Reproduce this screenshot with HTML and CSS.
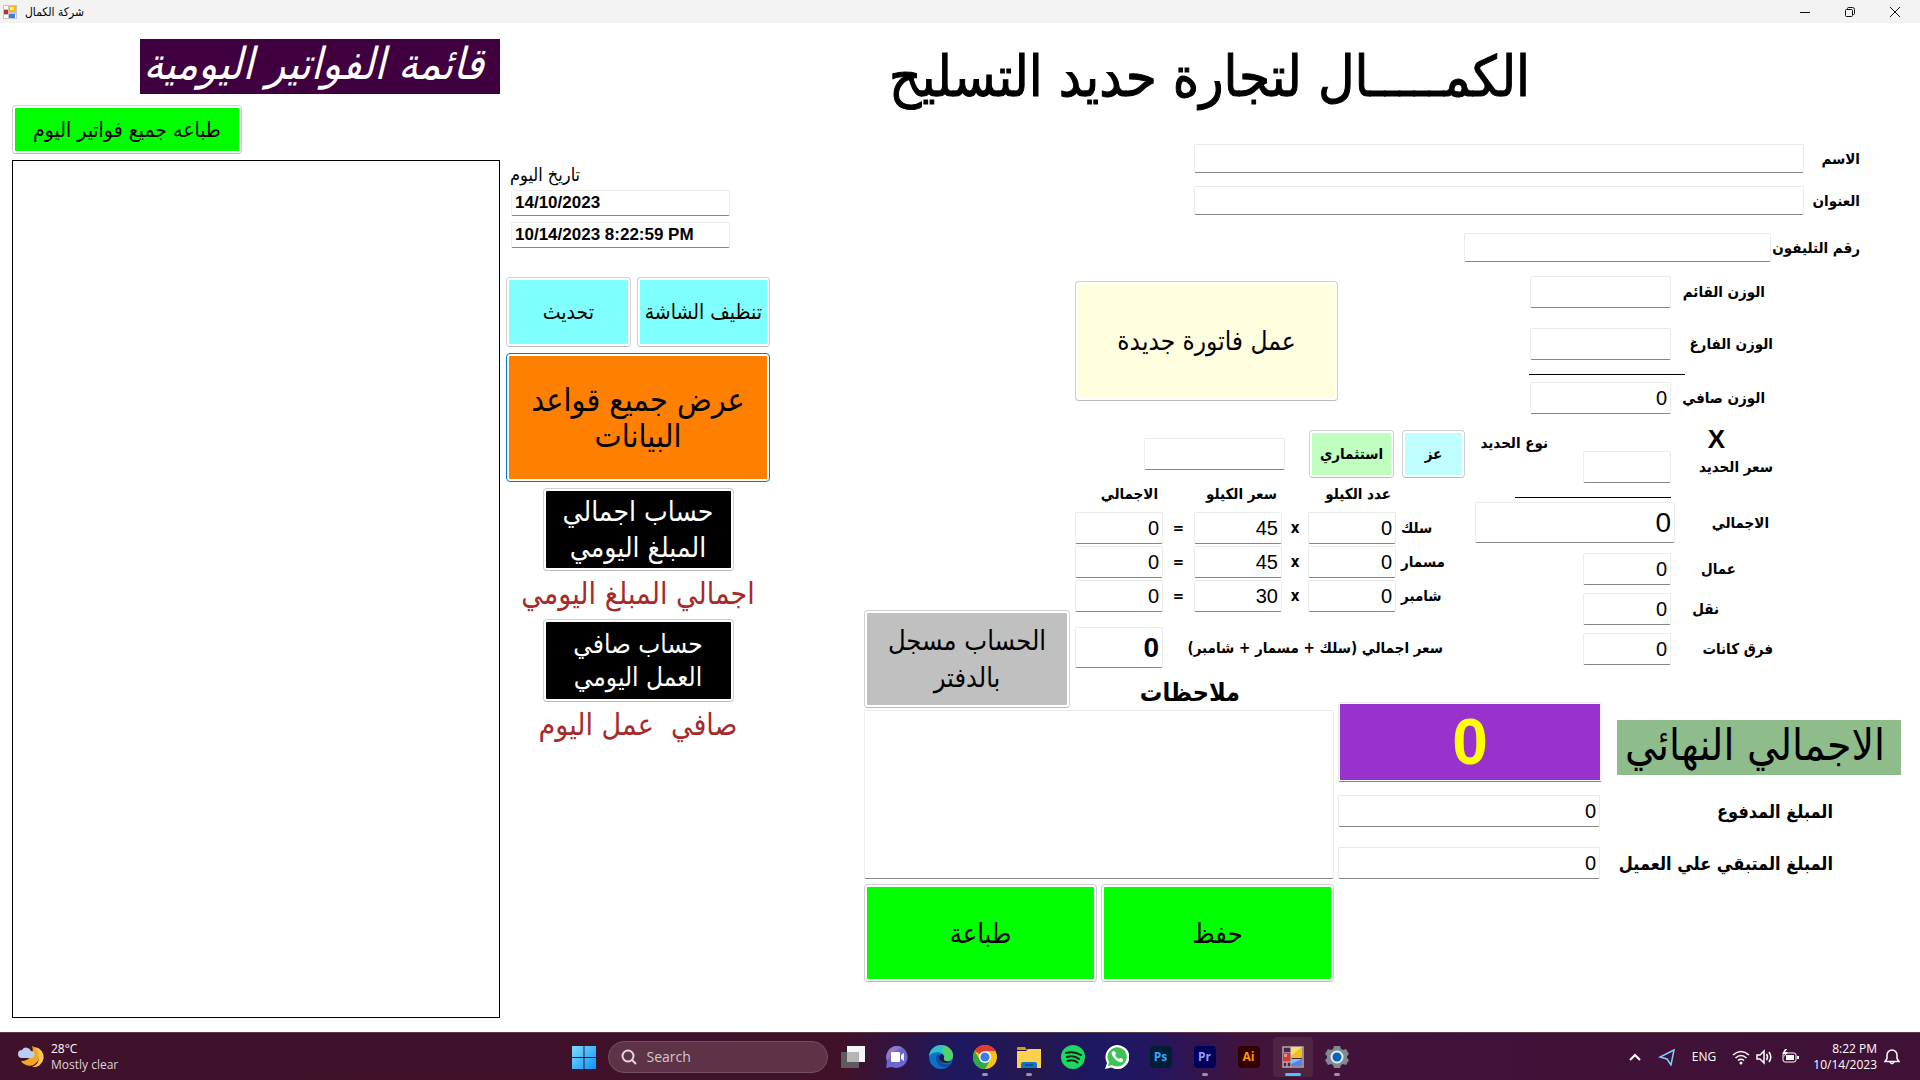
FILE: index.html
```html
<!DOCTYPE html>
<html lang="ar">
<head>
<meta charset="utf-8">
<title>شركة الكمال</title>
<link rel="stylesheet" href="styles.css">
</head>
<body>
<header class="titlebar">
  <svg class="app-icon" viewBox="0 0 14 14"><rect width="14" height="14" fill="#c4c4c4"/><path d="M1 1h4v3H1zM1 10h4v3H1zM12 9h1v4h-1z" fill="#fff"/><rect x="6" y="1" width="7" height="6" fill="#f2b71d"/><rect x="7" y="2" width="4" height="3" fill="#ffe27a"/><rect x="1" y="5" width="4" height="4" fill="#c9281c"/><rect x="6" y="9" width="6" height="4" fill="#3f7ce0"/></svg>
  <span class="titlebar-text" dir="rtl">شركة الكمال</span>
  <div class="window-buttons">
    <button aria-label="Minimize"><svg viewBox="0 0 12 12"><path d="M1 6.500h10"/></svg></button>
    <button aria-label="Restore"><svg viewBox="0 0 12 12"><rect x="1.500" y="3.500" width="7" height="7" rx="1"/><path d="M3.500 3.500v-1q0-1 1-1h4q2 0 2 2v4q0 1-1 1h-1"/></svg></button>
    <button aria-label="Close"><svg viewBox="0 0 12 12"><path d="M1 1l10 10M11 1L1 11"/></svg></button>
  </div>
</header>

<main class="window">
  <section class="invoices">
    <h2 class="list-title" dir="rtl">قائمة الفواتير اليومية</h2>
    <button class="btn green print-all" dir="rtl">طباعه جميع فواتير اليوم</button>
    <div class="invoice-list"></div>
  </section>

  <section class="actions">
    <label class="date-label" for="today" dir="rtl">تاريخ اليوم</label>
    <input class="field date" id="today" value="14/10/2023">
    <input class="field date" aria-label="الوقت" value="10/14/2023 8:22:59 PM">
    <div class="pair">
      <button class="btn aqua refresh" dir="rtl">تحديث</button>
      <button class="btn aqua clear" dir="rtl">تنظيف الشاشة</button>
    </div>
    <button class="btn orange" dir="rtl">عرض جميع قواعد<br>البيانات</button>
    <button class="btn black" dir="rtl">حساب اجمالي<br>المبلغ اليومي</button>
    <p class="result" dir="rtl">اجمالي المبلغ اليومي</p>
    <button class="btn black small" dir="rtl">حساب صافي<br>العمل اليومي</button>
    <p class="result" dir="rtl">صافي &nbsp;عمل اليوم</p>
  </section>

  <section class="invoice" dir="rtl">
    <h1>الكمـــــال لتجارة حديد التسليح</h1>
    <div class="customer">
      <div class="customer-row"><label for="name">الاسم</label><input class="field" id="name"></div>
      <div class="customer-row"><label for="address">العنوان</label><input class="field" id="address"></div>
      <div class="customer-row phone"><label for="phone">رقم التليفون</label><input class="field" id="phone"></div>
    </div>

    <div class="details">
      <div class="calc">
        <div class="calc-row inset"><label for="gross">الوزن القائم</label><input class="field num wide" id="gross"></div>
        <div class="calc-row tare"><label for="tare">الوزن الفارغ</label><input class="field num wide" id="tare"></div>
        <hr class="rule">
        <div class="calc-row inset"><label for="net">الوزن صافي</label><input class="field num wide" id="net" value="0"></div>
        <div class="times">X</div>
        <div class="calc-row"><label for="price">سعر الحديد</label><input class="field num" id="price"></div>
        <hr class="rule second-rule">
        <div class="calc-row sum-row"><label for="total">الاجمالي</label><input class="field num big" id="total" value="0"></div>
        <div class="calc-row inset-mid"><label for="workers">عمال</label><input class="field num" id="workers" value="0"></div>
        <div class="calc-row inset-deep"><label for="transport">نقل</label><input class="field num" id="transport" value="0"></div>
        <div class="calc-row"><label for="diff">فرق كانات</label><input class="field num" id="diff" value="0"></div>
      </div>

      <div class="extras">
        <button class="btn cream">عمل فاتورة جديدة</button>
        <div class="type-row">
          <label for="type">نوع الحديد</label>
          <button class="btn ezz">عز</button>
          <button class="btn mint">استثماري</button>
          <input class="field num wide" id="type">
        </div>
        <table class="parts">
          <thead><tr><td class="part"></td><th>عدد الكيلو</th><td class="op-x"></td><th>سعر الكيلو</th><td class="op-eq"></td><th>الاجمالي</th></tr></thead>
          <tbody>
            <tr><th class="part">سلك</th><td><input class="field num" aria-label="عدد سلك" value="0"></td><td class="op-x">x</td><td><input class="field num" aria-label="سعر سلك" value="45"></td><td class="op-eq">=</td><td><input class="field num" aria-label="اجمالي سلك" value="0"></td></tr>
            <tr><th class="part">مسمار</th><td><input class="field num" aria-label="عدد مسمار" value="0"></td><td class="op-x">x</td><td><input class="field num" aria-label="سعر مسمار" value="45"></td><td class="op-eq">=</td><td><input class="field num" aria-label="اجمالي مسمار" value="0"></td></tr>
            <tr><th class="part">شامبر</th><td><input class="field num" aria-label="عدد شامبر" value="0"></td><td class="op-x">x</td><td><input class="field num" aria-label="سعر شامبر" value="30"></td><td class="op-eq">=</td><td><input class="field num" aria-label="اجمالي شامبر" value="0"></td></tr>
          </tbody>
        </table>
        <div class="parts-total"><label for="parts-sum">سعر اجمالي (سلك + مسمار + شامبر)</label><input class="field num big bold" id="parts-sum" value="0"></div>
        <label class="notes-label" for="notes">ملاحظات</label>
      </div>

      <button class="btn grey">الحساب مسجل<br>بالدفتر</button>
    </div>

    <div class="footer-row">
      <div class="totals">
        <div class="total-row grand"><label for="grand">الاجمالي النهائي</label><input class="field" id="grand" value="0"></div>
        <div class="total-row"><label for="paid">المبلغ المدفوع</label><input class="field num" id="paid" value="0"></div>
        <div class="total-row"><label for="rest">المبلغ المتبقي علي العميل</label><input class="field num" id="rest" value="0"></div>
      </div>
      <div class="notes">
        <textarea class="field" id="notes"></textarea>
        <div class="notes-buttons">
          <button class="btn green">حفظ</button>
          <button class="btn green">طباعة</button>
        </div>
      </div>
    </div>
  </section>
</main>

<footer class="taskbar">
  <div class="weather">
    <svg viewBox="0 0 26 26"><path d="M14 2a10 10 0 1 1-11 15a11 11 0 0 0 11-15z" fill="#f5a623"/><path d="M17 3a10 10 0 0 1-3 20c8-2 9-12 3-20z" fill="#ffc65c"/><path d="M4 14a4 4 0 0 1 0-8a5 5 0 0 1 9 1a3.500 3.500 0 0 1 0 7z" fill="#b9cdec"/></svg>
    <div>28°C<br><span>Mostly clear</span></div>
  </div>
  <nav class="apps">
    <button class="app" aria-label="Start"><svg viewBox="0 0 24 24"><defs><linearGradient id="w" x1="0" y1="0" x2="1" y2="1"><stop offset="0" stop-color="#7fdcff"/><stop offset="1" stop-color="#0a94f8"/></linearGradient></defs><path d="M0 1h11.500v11H0zM12.500 1H24v11H12.500zM0 13h11.500v11H0zM12.500 13H24v11H12.500z" fill="url(#w)"/></svg></button>
    <div class="search">
      <svg viewBox="0 0 16 16"><circle cx="7" cy="7" r="5.500"/><path d="M11 11l4 4"/></svg>
      <input aria-label="Search" placeholder="Search">
    </div>
    <button class="app" aria-label="Task view"><svg viewBox="0 0 24 24"><rect x="6" y="1" width="18" height="16" fill="#f4f4f4"/><rect y="7" width="18" height="16" fill="#5c5c5c"/><rect x="6" y="7" width="12" height="10" fill="#b5b5b5"/></svg></button>
    <button class="app" aria-label="Chat"><svg viewBox="0 0 24 24"><path d="M12 1a11 11 0 1 1-5 21l-6 1 1-7A11 11 0 0 1 12 1z" fill="#6a67cf"/><path d="M12 1a11 11 0 0 0-10 15l5-8 10-6z" fill="#8f78c4"/><rect x="6" y="7" width="9" height="10" rx="1" fill="#fff"/><path d="M16 10l3-2v8l-3-2z" fill="#fff"/></svg></button>
    <button class="app" aria-label="Edge"><svg viewBox="0 0 24 24"><circle cx="12" cy="12" r="12" fill="#0c72c8"/><path d="M0 11C1 4 6 0 12 0c7 0 12 5 12 10 0 4-3 6-6 6-4 0-4-2-3-3 1-5-8-9-15-2z" fill="#2fc2c8"/><path d="M15 1c6 1 9 6 9 10 0 3-3 5-6 5-4 0-4-2-3-3 1-2 1-5-2-7z" fill="#58d362"/><path d="M9 9c-4 5-1 13 7 13 3 0 5-2 6-4-6 3-12 0-11-5 0-2-1-3-2-4z" fill="#134a9a"/><path d="M11 10c-2 3 0 8 6 8 3 0 5-1 6-2-2 1-9 1-8-3 1-2-2-5-4-3z" fill="#1c1850"/></svg></button>
    <button class="app open" aria-label="Chrome"><svg viewBox="0 0 24 24"><circle cx="12" cy="12" r="12" fill="#fbc116"/><path d="M12 12L1.600 6A12 12 0 0 1 22.400 6H12z" fill="#e33b2e"/><path d="M1.600 6A12 12 0 0 0 12 24l5.200-9L12 12 6.800 15z" fill="#2da94f"/><circle cx="12" cy="12" r="6" fill="#fff"/><circle cx="12" cy="12" r="4.600" fill="#3b7ded"/></svg></button>
    <button class="app open" aria-label="File Explorer"><svg viewBox="0 0 24 24"><path d="M0 3q0-1 1-1h7l2 3H0z" fill="#d99b13"/><path d="M0 6h9l2-2h13v19H0z" fill="#ffd04d"/><path d="M4 23v-4q0-2 2-2h12q2 0 2 2v4z" fill="#1475c4"/><path d="M8 20h8" stroke="#0a4a86" stroke-width="1.500"/></svg></button>
    <button class="app" aria-label="Spotify"><svg viewBox="0 0 24 24"><circle cx="12" cy="12" r="12" fill="#1ed760"/><path d="M5 8q8-2 15 2M6 12q7-2 12 2M6.500 16q6-2 10 1.500" fill="none" stroke="#10240f" stroke-width="2" stroke-linecap="round"/></svg></button>
    <button class="app" aria-label="WhatsApp"><svg viewBox="0 0 24 24"><path d="M0 24l2-6A12 12 0 1 1 6.500 22.500z" fill="#fff"/><path d="M3 21l1-4A9.600 9.600 0 1 1 7 20z" fill="#3fc153"/><path d="M8 6c-2 1-2 4 2 8s7 4 8 2c1-2-2-3-3-3l-1 1c-2-1-3-2-4-4l1-1c0-1-1-3-3-3z" fill="#fff"/></svg></button>
    <button class="app" aria-label="Photoshop"><span class="tile ps">Ps</span></button>
    <button class="app open" aria-label="Premiere"><span class="tile pr">Pr</span></button>
    <button class="app" aria-label="Illustrator"><span class="tile ai">Ai</span></button>
    <button class="app active" aria-label="شركة الكمال"><svg viewBox="0 0 24 24"><path d="M2 2h20v20H2zM2 8h8M2 17h20M10 2v20M6 17v5" fill="none" stroke="#b8a5ae" stroke-width="1.500"/><rect x="10" y="2" width="11" height="11" fill="#efbe21"/><path d="M10 2h11L10 11z" fill="#f8de63"/><rect x="2" y="8" width="7" height="8" fill="#d83a30"/><rect x="3" y="9" width="3" height="3" fill="#f38b80"/><rect x="10" y="14" width="11" height="7" fill="#4a88ee"/><path d="M10 14h11L10 19z" fill="#8db8f8"/></svg></button>
    <button class="app open" aria-label="Settings"><svg viewBox="0 0 24 24"><path d="M9 1h6l1 3 2 1 3-1 3 5-2 2v2l2 2-3 5-3-1-2 1-1 3H9l-1-3-2-1-3 1-3-5 2-2v-2L0 9l3-5 3 1 2-1z" fill="#7f8a93"/><circle cx="12" cy="12" r="6.500" fill="#e8ecef"/><circle cx="12" cy="12" r="4.500" fill="#0b63b5"/></svg></button>
  </nav>
  <div class="tray">
    <svg class="ico chev" viewBox="0 0 18 18"><path d="M4 12l5-5 5 5" stroke-width="2"/></svg>
    <svg class="ico loc" viewBox="0 0 18 18"><path d="M16 2L2 9l7 2 4 6z" stroke="#7fd0f5" stroke-width="1.500"/></svg>
    <span class="lang">ENG</span>
    <svg class="ico" viewBox="0 0 18 18"><path d="M1 7q8-7 16 0M3.500 10q5.500-5 11 0M6 12.500q3-2.500 6 0" stroke-width="1.500"/><circle cx="9" cy="15" r="1.500" fill="#fff" stroke="none"/></svg>
    <svg class="ico vol" viewBox="0 0 18 18"><path d="M1 7h3l4-4v12l-4-4H1zM10.500 6q2 3 0 6M13 4q3.500 5 0 10" stroke-width="1.500"/></svg>
    <svg class="ico bat" viewBox="0 0 18 18"><rect x="2" y="5" width="13" height="9" rx="2"/><rect x="5" y="7" width="8" height="5" fill="#fff" stroke="none"/><path d="M17 8v3" stroke-width="2"/><path d="M4 1L1 6h3l-2 4 5-6H4l2-3z" fill="#fff" stroke="none"/></svg>
    <div class="clock">8:22 PM<br>10/14/2023</div>
    <svg class="ico bell" viewBox="0 0 18 18"><path d="M2 13.500h14l-2-3V7A5 5 0 0 0 4 7v3.500zM7 14q2 3.500 4 0" stroke-width="1.500"/></svg>
  </div>
</footer>
</body>
</html>
```
FILE: styles.css
```css
* { box-sizing: border-box; }

body {
  margin: 0;
  min-height: 100vh;
  display: flex;
  flex-direction: column;
  background: #fff;
  color: #000;
  font-family: "DejaVu Sans Condensed", "DejaVu Sans", sans-serif;
  font-size: 16px;
}

h1, h2, p { margin: 0; font-weight: normal; }
button, input, textarea { font: inherit; color: inherit; }
svg { display: block; }

/* Title bar */
.titlebar {
  display: flex;
  align-items: center;
  height: 23px;
  padding: 0 3px;
  background: #f3f3f3;
}
.app-icon { width: 14px; height: 14px; }
.titlebar-text { margin-left: 8px; font-size: 12px; }
.window-buttons { display: flex; margin-left: auto; }
.window-buttons button {
  display: grid;
  place-items: center;
  width: 45px;
  height: 23px;
  padding: 0;
  border: 0;
  background: none;
}
.window-buttons svg { width: 12px; height: 12px; fill: none; stroke: #111; }

/* Shared controls */
.field {
  min-width: 0;
  border: 1px solid #ebebeb;
  border-bottom-color: #868686;
  border-radius: 2px;
  background: #fff;
  padding: 0 3px;
  outline: 0;
}
.num {
  width: 88px;
  height: 32px;
  direction: ltr;
  text-align: right;
  font-family: "Liberation Sans", sans-serif;
  font-size: 20px;
  font-weight: normal;
}
.wide { width: 141px; }
.big { height: 41px; font-size: 28px; }
.bold { font-weight: bold; }

.btn {
  border: 1px solid #d0d0d0;
  border-bottom-color: #bababa;
  border-radius: 4px;
  padding: 2px;
  background-color: #fff;
  background-clip: content-box;
  text-align: center;
  font-weight: normal;
  white-space: nowrap;
}
.green { background-color: #00ff00; }
.aqua { background-color: #80ffff; }
.orange { background-color: #ff8000; border-color: #0078d4; }
.black { background-color: #000; color: #fff; }
.cream { background-color: #ffffe0; }
.mint { background-color: #c0ffc0; }
.ezz { background-color: #c0ffff; }
.grey { background-color: #c0c0c0; }

/* Three panes */
.window {
  flex: 1;
  display: grid;
  grid-template-columns: minmax(0, 488fr) minmax(0, 264fr) minmax(0, 1137fr);
  padding: 0 19px 0 12px;
}

.invoices {
  display: flex;
  flex-direction: column;
  align-items: flex-start;
  padding: 16px 0 14px;
}
.list-title {
  align-self: flex-end;
  height: 55px;
  padding: 0 16px 0 4px;
  background: #400040;
  color: #fff;
  font-size: 44px;
  line-height: 50px;
  font-style: italic;
  white-space: nowrap;
}
.print-all { width: 230px; height: 49px; margin: 11px 0 6px; font-size: 21px; }
.invoice-list { flex: 1; align-self: stretch; border: 1px solid #000; }

.actions {
  display: flex;
  flex-direction: column;
  margin-left: 6px;
  margin-right: -6px;
  padding-top: 140px;
}
.date-label { align-self: flex-start; margin-left: 4px; height: 27px; line-height: 24px; font-size: 18px; }
.date {
  width: 219px;
  height: 26px;
  margin: 0 0 6px 5px;
  font-family: "Liberation Sans", sans-serif;
  font-size: 17px;
  font-weight: bold;
}
.pair { display: flex; gap: 6px; height: 70px; margin: 23px 0 6px; font-size: 21px; }
.refresh { flex: 124; }
.clear { flex: 133; }
.orange { height: 129px; font-size: 32px; line-height: 36px; }
.black { align-self: center; width: 191px; height: 83px; margin-top: 6px; font-size: 28px; line-height: 36px; }
.small { font-size: 26px; line-height: 33px; }
.result { height: 42px; line-height: 46px; text-align: center; font-size: 30px; color: #a52a2a; white-space: nowrap; }

/* Invoice form */
.invoice { display: flex; flex-direction: column; padding-left: 100px; font-size: 15px; font-weight: bold; }
.invoice h1 {
  height: 121px;
  padding-right: 371px;
  font-size: 56px;
  line-height: 108px;
  white-space: nowrap;
  -webkit-text-stroke: 1px #000;
}

.customer { display: flex; flex-direction: column; gap: 13px; padding: 0 41px 0 330px; }
.customer-row { display: flex; align-items: center; }
.customer-row label { width: 56px; white-space: nowrap; }
.customer-row .field { flex: 1; height: 29px; }
.phone { margin-top: 5px; padding-left: 270px; }
.customer-row.phone label { width: 89px; }

.details { display: flex; padding-right: 128px; margin-top: 14px; }
.calc { width: 298px; }
.calc-row { display: flex; align-items: center; margin-bottom: 8px; }
.calc-row label { width: 102px; white-space: nowrap; }
.tare { margin: 20px 0 0; }
.inset { margin-bottom: 0; }
.inset label { padding-right: 8px; }
.inset-mid label { padding-right: 37px; }
.inset-deep label { padding-right: 54px; }
.rule { width: 156px; margin: 14px 88px 7px 0; border: 0; border-top: 1px solid #000; }
.second-rule { margin: 14px 102px 4px 0; }
.times { height: 37px; padding-right: 48px; font: bold 26px/50px "Liberation Sans", sans-serif; }
.sum-row { margin-bottom: 10px; }
.sum-row .field { width: 200px; }
.sum-row label { width: 98px; padding-right: 4px; }

.extras { display: flex; flex-direction: column; width: 400px; }
.cream { align-self: flex-end; width: 263px; height: 120px; margin-top: 5px; font-size: 26px; }
.type-row { display: flex; align-items: center; height: 48px; margin: 29px -73px 0 0; }
.type-row label { align-self: flex-start; width: 83px; line-height: 26px; }
.ezz { width: 63px; height: 48px; font-weight: bold; }
.mint { width: 85px; height: 48px; margin: 0 8px 0 24px; font-weight: bold; }

.parts { width: 400px; border-collapse: collapse; table-layout: fixed; }
.parts td, .parts th { padding: 0 0 2px; height: 34px; vertical-align: middle; white-space: nowrap; }
.parts thead th { height: 33px; width: 88px; padding-right: 5px; text-align: right; }
.parts .field { display: block; }
.parts .part { width: 79px; padding-left: 45px; text-align: right; }
.parts .op-x { width: 26px; text-align: center; }
.parts .op-eq { width: 31px; text-align: center; }
.parts tbody .part { padding-left: 5px; text-align: left; }
.parts-total { display: flex; justify-content: space-between; align-items: center; margin-top: 13px; padding-right: 32px; }
.notes-label { height: 42px; line-height: 50px; margin-right: 235px; font-size: 25px; white-space: nowrap; }

.grey { flex: 1; align-self: flex-end; height: 98px; margin: 0 5px 2px 0; font-size: 27px; line-height: 37px; }

.footer-row { display: flex; gap: 4px; }
.totals { width: 563px; margin-top: -8px; }
.total-row { display: flex; align-items: center; justify-content: space-between; margin-bottom: 20px; padding-right: 68px; font-size: 18px; }
.total-row .num { width: 262px; }
.total-row label { white-space: nowrap; }
.total-row.grand { height: 80px; margin-bottom: 13px; padding: 0; }
.grand label { height: 55px; padding: 0 16px 0 8px; margin-top: 10px; background: #8fbc8b; font-size: 44px; line-height: 50px; font-weight: normal; }
.grand .field {
  width: 264px;
  height: 80px;
  padding: 1px;
  background-color: #9932cc;
  background-clip: content-box;
  color: #ffff00;
  text-align: center;
  font: bold 64px "Liberation Sans", sans-serif;
}
.notes { flex: 1; display: flex; flex-direction: column; }
.notes textarea { height: 169px; resize: none; }
.notes-buttons { display: flex; gap: 4px; margin-top: 5px; }
.notes-buttons .btn { flex: 1; height: 98px; font-size: 27px; }

/* Taskbar */
.taskbar {
  display: grid;
  grid-template-columns: 1fr auto 1fr;
  height: 48px;
  color: #fff;
  font-family: "Open Sans", "Noto Sans", sans-serif;
  font-size: 12px;
  background: linear-gradient(90deg, #40112a 0%, #41112a 44%, #1d1860 50%, #26174f 54%, #1d1862 57%, #241661 60%, #42133b 65%, #3f1136 100%);
  border-top: 1px solid #5d3b4d;
}
.weather { display: flex; align-items: center; gap: 7px; padding-left: 18px; line-height: 16px; }
.weather svg { width: 26px; height: 26px; }
.weather span { color: #dfd0d8; }
.apps { display: flex; align-items: center; }
.app {
  position: relative;
  display: grid;
  place-items: center;
  width: 44px;
  height: 40px;
  padding: 0;
  border: 0;
  border-radius: 4px;
  background: none;
}
.app svg { width: 24px; height: 24px; }
.open::after, .active::after {
  content: "";
  position: absolute;
  bottom: 1px;
  left: 19px;
  width: 6px;
  height: 3px;
  border-radius: 2px;
  background: #a58fa3;
}
.active { width: 40px; margin: 0 2px; background: #502543; }
.active::after { left: 12px; width: 16px; background: #4cc2ff; }
.search {
  display: flex;
  align-items: center;
  gap: 10px;
  width: 220px;
  height: 32px;
  margin: 0 3px 0 2px;
  padding: 0 12px;
  border: 1px solid #75505f;
  border-radius: 16px;
  background: #5e3347;
}
.search svg { width: 16px; height: 16px; fill: none; stroke: #e4d8de; stroke-width: 2; }
.search input { flex: 1; min-width: 0; padding: 0; border: 0; background: none; outline: 0; font-size: 14px; }
.search input::placeholder { color: #d5c6cd; }
.tile {
  display: grid;
  place-items: center;
  width: 22px;
  height: 22px;
  border-radius: 4px;
  font-size: 12px;
  font-weight: bold;
}
.ps { background: #001e36; color: #31a8ff; }
.pr { background: #00005b; color: #9999ff; }
.ai { background: #330000; color: #ff9a00; }
.tray { display: flex; align-items: center; justify-content: flex-end; gap: 4px; padding-right: 19px; }
.ico { width: 18px; height: 18px; fill: none; stroke: #fff; }
.vol { margin-left: 2px; }
.bat { margin-left: 3px; }
.loc { margin-left: 10px; }
.lang { margin: 0 12px 0 12px; }
.clock { margin-left: 10px; text-align: right; line-height: 16px; }
.bell { margin-left: 2px; }
```
